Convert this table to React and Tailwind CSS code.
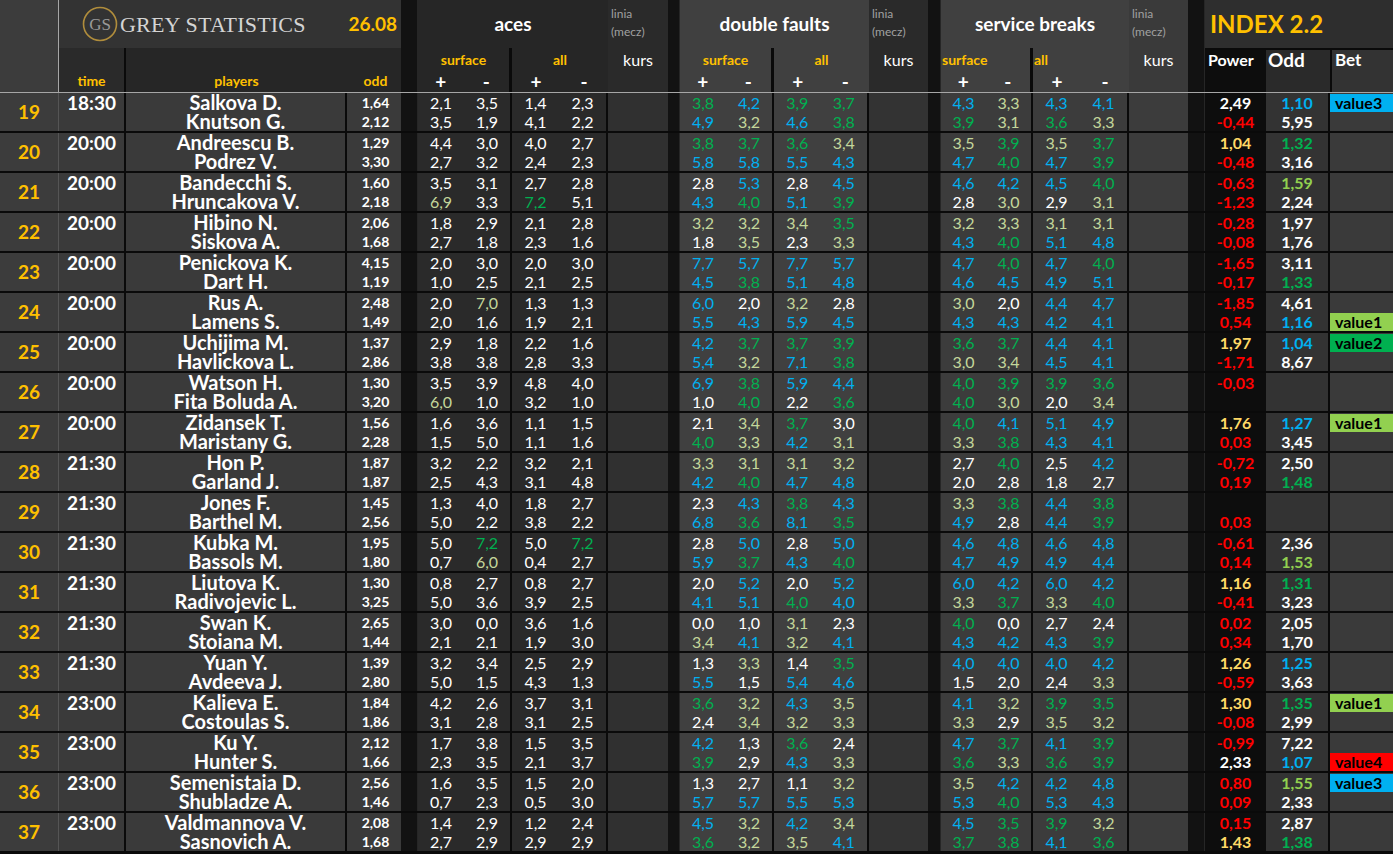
const rows = [
  [19, '18:30', 'Salkova D.', 'Knutson G.', '1,64', '2,12', '2,1 3,5 1,4 2,3|3,5 1,9 4,1 2,2', '3,8g 4,2b 3,9g 3,7g|4,9b 3,2o 4,6b 3,8g', '4,3b 3,3o 4,3b 4,1b|3,9g 3,1o 3,6g 3,3o', '2,49|-0,44r', '1,10b|5,95', 'value3|'],
  [20, '20:00', 'Andreescu B.', 'Podrez V.', '1,29', '3,30', '4,4 3,0 4,0 2,7|2,7 3,2 2,4 2,3', '3,8g 3,7g 3,6g 3,4o|5,8b 5,8b 5,5b 4,3b', '3,5o 3,9g 3,5o 3,7g|4,7b 4,0g 4,7b 3,9g', '1,04y|-0,48r', '1,32g|3,16', '|'],
  [21, '20:00', 'Bandecchi S.', 'Hruncakova V.', '1,60', '2,18', '3,5 3,1 2,7 2,8|6,9o 3,3 7,2g 5,1', '2,8 5,3b 2,8 4,5b|4,3b 4,0g 5,1b 3,9g', '4,6b 4,2b 4,5b 4,0g|2,8 3,0o 2,9 3,1o', '-0,63r|-1,23r', '1,59l|2,24', '|'],
  [22, '20:00', 'Hibino N.', 'Siskova A.', '2,06', '1,68', '1,8 2,9 2,1 2,8|2,7 1,8 2,3 1,6', '3,2o 3,2o 3,4o 3,5g|1,8 3,5o 2,3 3,3o', '3,2o 3,3o 3,1o 3,1o|4,3b 4,0g 5,1b 4,8b', '-0,28r|-0,08r', '1,97|1,76', '|'],
  [23, '20:00', 'Penickova K.', 'Dart H.', '4,15', '1,19', '2,0 3,0 2,0 3,0|1,0 2,5 2,1 2,5', '7,7b 5,7b 7,7b 5,7b|4,5b 3,8g 5,1b 4,8b', '4,7b 4,0g 4,7b 4,0g|4,6b 4,5b 4,9b 5,1b', '-1,65r|-0,17r', '3,11|1,33g', '|'],
  [24, '20:00', 'Rus A.', 'Lamens S.', '2,48', '1,49', '2,0 7,0o 1,3 1,3|2,0 1,6 1,9 2,1', '6,0b 2,0 3,2o 2,8|5,5b 4,3b 5,9b 4,5b', '3,0o 2,0 4,4b 4,7b|4,3b 4,3b 4,2b 4,1b', '-1,85r|0,54r', '4,61|1,16b', '|value1'],
  [25, '20:00', 'Uchijima M.', 'Havlickova L.', '1,37', '2,86', '2,9 1,8 2,2 1,6|3,8 3,8 2,8 3,3', '4,2b 3,7g 3,7g 3,9g|5,4b 3,2o 7,1b 3,8g', '3,6g 3,7g 4,4b 4,1b|3,0o 3,4o 4,5b 4,1b', '1,97y|-1,71r', '1,04b|8,67', 'value2|'],
  [26, '20:00', 'Watson H.', 'Fita Boluda A.', '1,30', '3,20', '3,5 3,9 4,8 4,0|6,0o 1,0 3,2 1,0', '6,9b 3,8g 5,9b 4,4b|1,0 4,0g 2,2 3,6g', '4,0g 3,9g 3,9g 3,6g|4,0g 3,0o 2,0 3,4o', '-0,03r|_', '_|_', '|'],
  [27, '20:00', 'Zidansek T.', 'Maristany G.', '1,56', '2,28', '1,6 3,6 1,1 1,5|1,5 5,0 1,1 1,6', '2,1 3,4o 3,7g 3,0|4,0g 3,3o 4,2b 3,1o', '4,0g 4,1b 5,1b 4,9b|3,3o 3,8g 4,3b 4,1b', '1,76y|0,03r', '1,27b|3,45', 'value1|'],
  [28, '21:30', 'Hon P.', 'Garland J.', '1,87', '1,87', '3,2 2,2 3,2 2,1|2,5 4,3 3,1 4,8', '3,3o 3,1o 3,1o 3,2o|4,2b 4,0g 4,7b 4,8b', '2,7 4,0g 2,5 4,2b|2,0 2,8 1,8 2,7', '-0,72r|0,19r', '2,50|1,48g', '|'],
  [29, '21:30', 'Jones F.', 'Barthel M.', '1,45', '2,56', '1,3 4,0 1,8 2,7|5,0 2,2 3,8 2,2', '2,3 4,3b 3,8g 4,3b|6,8b 3,6g 8,1b 3,5g', '3,3o 3,8g 4,4b 3,8g|4,9b 2,8 4,4b 3,9g', '_|0,03r', '_|_', '|'],
  [30, '21:30', 'Kubka M.', 'Bassols M.', '1,95', '1,80', '5,0 7,2g 5,0 7,2g|0,7 6,0o 0,4 2,7', '2,8 5,0b 2,8 5,0b|5,9b 3,7g 4,3b 4,0g', '4,6b 4,8b 4,6b 4,8b|4,7b 4,9b 4,9b 4,4b', '-0,61r|0,14r', '2,36|1,53l', '|'],
  [31, '21:30', 'Liutova K.', 'Radivojevic L.', '1,30', '3,25', '0,8 2,7 0,8 2,7|5,0 3,6 3,9 2,5', '2,0 5,2b 2,0 5,2b|4,1b 5,1b 4,0g 4,0b', '6,0b 4,2b 6,0b 4,2b|3,3o 3,7g 3,3o 4,0g', '1,16y|-0,41r', '1,31g|3,23', '|'],
  [32, '21:30', 'Swan K.', 'Stoiana M.', '2,65', '1,44', '3,0 0,0 3,6 1,6|2,1 2,1 1,9 3,0', '0,0 1,0 3,1o 2,3|3,4o 4,1b 3,2o 4,1b', '4,0g 0,0 2,7 2,4|4,3b 4,2b 4,3b 3,9g', '0,02r|0,34r', '2,05|1,70', '|'],
  [33, '21:30', 'Yuan Y.', 'Avdeeva J.', '1,39', '2,80', '3,2 3,4 2,5 2,9|5,0 1,5 4,3 1,3', '1,3 3,3o 1,4 3,5g|5,5b 1,5 5,4b 4,6b', '4,0b 4,0b 4,0b 4,2b|1,5 2,0 2,4 3,3o', '1,26y|-0,59r', '1,25b|3,63', '|'],
  [34, '23:00', 'Kalieva E.', 'Costoulas S.', '1,84', '1,86', '4,2 2,6 3,7 3,1|3,1 2,8 3,1 2,5', '3,6g 3,2o 4,3b 3,5o|2,4 3,4o 3,2o 3,3o', '4,1b 3,2o 3,9g 3,5g|3,3o 2,9 3,5o 3,2o', '1,30y|-0,08r', '1,35g|2,99', 'value1|'],
  [35, '23:00', 'Ku Y.', 'Hunter S.', '2,12', '1,66', '1,7 3,8 1,5 3,5|2,3 3,5 2,1 3,7', '4,2b 1,3 3,6g 2,4|3,9g 2,9 4,3b 3,3o', '4,7b 3,7g 4,1b 3,9g|3,6g 3,3o 3,6g 3,9g', '-0,99r|2,33', '7,22|1,07b', '|value4'],
  [36, '23:00', 'Semenistaia D.', 'Shubladze A.', '2,56', '1,46', '1,6 3,5 1,5 2,0|0,7 2,3 0,5 3,0', '1,3 2,7 1,1 3,2o|5,7b 5,7b 5,5b 5,3b', '3,5o 4,2b 4,2b 4,8b|5,3b 4,0g 5,3b 4,3b', '0,80r|0,09r', '1,55l|2,33', 'value3|'],
  [37, '23:00', 'Valdmannova V.', 'Sasnovich A.', '2,08', '1,68', '1,4 2,9 1,2 2,4|2,7 2,9 2,9 2,9', '4,5b 3,2o 4,2b 3,4o|3,6g 3,2o 3,5o 4,1b', '4,5b 3,5g 3,9g 3,2o|3,7g 3,8g 4,1b 3,6g', '0,15r|1,43y', '2,87|1,38g', '|'],
];

const colors = {
  '': 'text-white',
  g: 'text-[#00b050]',
  b: 'text-[#00b0f0]',
  o: 'text-[#c4d79b]',
  r: 'text-[#ff0000]',
  y: 'text-[#ffd966]',
  l: 'text-[#92d050]',
};

const betBg = {
  value1: 'bg-[#92d050]',
  value2: 'bg-[#00b050]',
  value3: 'bg-[#00b0f0]',
  value4: 'bg-[#ff0000]',
};

function Num({ t, className = '' }) {
  const m = t.match(/^([-\d,]+)([a-z]?)$/);
  if (!m) return <div className={className} />;
  return <div className={`${className} ${colors[m[2]]}`}>{m[1]}</div>;
}

function lines(s) {
  return s.split('|').map((l) => l.split(' '));
}

// one half of a stat block (surface or all): two lines, two values each
function Half({ vals, w, bg }) {
  return (
    <div className={`${w} ${bg} shrink-0 flex flex-col border-r-2 border-[#0a0a0a]`}>
      {vals.map((l, i) => (
        <div key={i} className="flex h-[19px] leading-[19px] text-[16px]">
          {l.map((t, j) => (
            <Num key={j} t={t} className="flex-1 text-center" />
          ))}
        </div>
      ))}
    </div>
  );
}

function Stripe({ w }) {
  return <div className={`${w} shrink-0 bg-[#121212] border-r border-[#262626]`} />;
}

function Row({ r }) {
  const [n, time, p1, p2, o1, o2, aces, df, sb, pw, od, bet] = r;
  const a = lines(aces);
  const d = lines(df);
  const s = lines(sb);
  const split = (x, k) => x.map((l) => l.slice(k, k + 2));
  return (
    <div className="flex h-[40px] border-b-2 border-[#0a0a0a]">
      <div className="w-[59px] shrink-0 bg-[#3c3c3c] border-r border-[#555] flex items-center justify-center text-[#ffc000] font-bold text-[19px]">
        {n}
      </div>
      <div className="w-[67px] shrink-0 bg-[#3a3a3a] border-r-2 border-[#0a0a0a] text-white font-bold text-[19px] leading-[20px] text-center">
        {time}
      </div>
      <div className="w-[221px] shrink-0 bg-[#3a3a3a] border-r-2 border-[#0a0a0a] text-white font-bold text-[20px] leading-[19px] text-center">
        <div className="h-[19px]">{p1}</div>
        <div className="h-[19px]">{p2}</div>
      </div>
      <div className="w-[54px] shrink-0 bg-[#3a3a3a] text-white font-bold text-[14px] leading-[19px] text-center pl-[3px]">
        <div>{o1}</div>
        <div>{o2}</div>
      </div>
      <Stripe w="w-[17px]" />
      <Half vals={split(a, 0)} w="w-[94px]" bg="bg-[#2a2a2a]" />
      <Half vals={split(a, 2)} w="w-[96px]" bg="bg-[#2a2a2a]" />
      <div className="w-[60px] shrink-0 bg-[#303030]" />
      <Stripe w="w-[12px]" />
      <Half vals={split(d, 0)} w="w-[94px]" bg="bg-[#404040]" />
      <Half vals={split(d, 2)} w="w-[95px]" bg="bg-[#404040]" />
      <div className="w-[59px] shrink-0 bg-[#333333]" />
      <Stripe w="w-[13px]" />
      <Half vals={split(s, 0)} w="w-[92px]" bg="bg-[#3c3c3c]" />
      <Half vals={split(s, 2)} w="w-[96px]" bg="bg-[#3c3c3c]" />
      <div className="w-[59px] shrink-0 bg-[#3c3c3c]" />
      <Stripe w="w-[17px]" />
      <div className="w-[61px] shrink-0 bg-[#0d0d0d] font-bold text-[16px] leading-[19px] flex flex-col">
        {pw.split('|').map((t, i) => (
          <Num key={i} t={t} className="h-[19px] text-center" />
        ))}
      </div>
      <div className="w-[64px] shrink-0 bg-[#333333] border-r-2 border-[#0a0a0a] font-bold text-[16px] leading-[19px] flex flex-col">
        {od.split('|').map((t, i) => (
          <Num key={i} t={t} className="h-[19px] text-center" />
        ))}
      </div>
      <div className="w-[63px] shrink-0 bg-[#3a3a3a] flex flex-col">
        {bet.split('|').map((b, i) => (
          <div key={i} className="h-[19px] pt-[1px]">
            {b && (
              <div className={`${betBg[b]} h-[18px] leading-[18px] pl-[5px] text-black font-bold text-[16px]`}>{b}</div>
            )}
          </div>
        ))}
      </div>
    </div>
  );
}

function Kurs({ w, bg }) {
  return (
    <div className={`${w} ${bg} shrink-0 flex flex-col`}>
      <div className="pt-[5px] pl-[3px] text-[12px] leading-[18px] text-[#a0a0a0]">
        <div>linia</div>
        <div>(mecz)</div>
      </div>
      <div className="mt-[9px] text-center text-white text-[16px] leading-[20px]">kurs</div>
    </div>
  );
}

function Section({ title, w, bg, ws, wa, left }) {
  const label = left ? 'text-left pl-[1px]' : 'text-center';
  return (
    <div className={`${w} ${bg} shrink-0 flex flex-col`}>
      <div className="h-[48px] flex items-center justify-center text-white font-bold text-[19px]">{title}</div>
      <div className="flex h-[44px]">
        {[ws, wa].map((sw, i) => (
          <div key={i} className={`${sw} shrink-0 flex flex-col ${i === 0 ? 'border-r-[3px] border-[#0a0a0a]' : ''}`}>
            <div className={`h-[24px] leading-[24px] text-[#ffc000] font-bold text-[14px] ${label}`}>
              {i === 0 ? 'surface' : 'all'}
            </div>
            <div className="flex h-[20px] leading-[20px] text-white font-bold text-[19px]">
              <div className="flex-1 text-center">+</div>
              <div className="flex-1 text-center">-</div>
            </div>
          </div>
        ))}
      </div>
    </div>
  );
}

function Header() {
  return (
    <div className="flex h-[93px] border-b border-[#a6a6a6]">
      <div className="w-[59px] shrink-0 bg-[#3c3c3c] border-r border-[#a6a6a6]" />
      <div className="w-[342px] shrink-0 flex flex-col">
        <div className="h-[48px] bg-[#333333] flex items-center">
          <svg width="36" height="36" viewBox="0 0 36 36" className="ml-[23px] shrink-0">
            <circle cx="18" cy="18" r="16.5" fill="none" stroke="#b08d3c" strokeWidth="1.6" />
            <text x="18" y="24" textAnchor="middle" fontFamily="Liberation Serif, serif" fontSize="17" fill="#9a9a9a">
              GS
            </text>
          </svg>
          <span className="ml-[2px] font-['Liberation_Serif',serif] text-[22px] text-[#d4d4d4] tracking-[0.2px]">GREY STATISTICS</span>
          <span className="ml-auto mr-[4px] text-[#ffc000] font-bold text-[19px]">26.08</span>
        </div>
        <div className="flex h-[44px] items-end text-[#ffc000] font-bold text-[14px] leading-[22px]">
          <div className="w-[67px] h-full bg-[#2a2a2a] border-r-2 border-[#0a0a0a] flex items-end justify-center">time</div>
          <div className="w-[221px] h-full bg-[#262626] flex items-end justify-center">players</div>
          <div className="w-[54px] h-full bg-[#262626] flex items-end justify-center pl-[3px]">odd</div>
        </div>
      </div>
      <Stripe w="w-[17px]" />
      <Section title="aces" w="w-[190px]" bg="bg-[#262626]" ws="w-[94px]" wa="w-[96px]" />
      <Kurs w="w-[60px]" bg="bg-[#2a2a2a]" />
      <Stripe w="w-[12px]" />
      <Section title="double faults" w="w-[189px]" bg="bg-[#404040]" ws="w-[94px]" wa="w-[95px]" />
      <Kurs w="w-[59px]" bg="bg-[#2a2a2a]" />
      <Stripe w="w-[13px]" />
      <Section title="service breaks" w="w-[188px]" bg="bg-[#404040]" ws="w-[92px]" wa="w-[96px]" left />
      <Kurs w="w-[59px]" bg="bg-[#3a3a3a]" />
      <Stripe w="w-[17px]" />
      <div className="w-[188px] shrink-0 flex flex-col">
        <div className="h-[48px] bg-[#2e2e2e] flex items-center pl-[5px] text-[#ffc000] font-bold text-[24px]">INDEX 2.2</div>
        <div className="flex h-[44px] font-bold text-white leading-[20px] pt-[2px]">
          <div className="w-[61px] h-full bg-[#0d0d0d] pl-[3px] text-[16px]">Power</div>
          <div className="w-[64px] h-full bg-[#2a2a2a] pl-[2px] text-[19px]">Odd</div>
          <div className="w-[63px] h-full bg-[#333333] border-l-2 border-[#0a0a0a] pl-[3px] text-[17px]">Bet</div>
        </div>
      </div>
    </div>
  );
}

export default function App() {
  return (
    <div className="w-[1393px] h-[854px] overflow-hidden bg-[#0a0a0a] font-['Lato','Open_Sans',sans-serif]">
      <Header />
      {rows.map((r) => (
        <Row key={r[0]} r={r} />
      ))}
    </div>
  );
}
